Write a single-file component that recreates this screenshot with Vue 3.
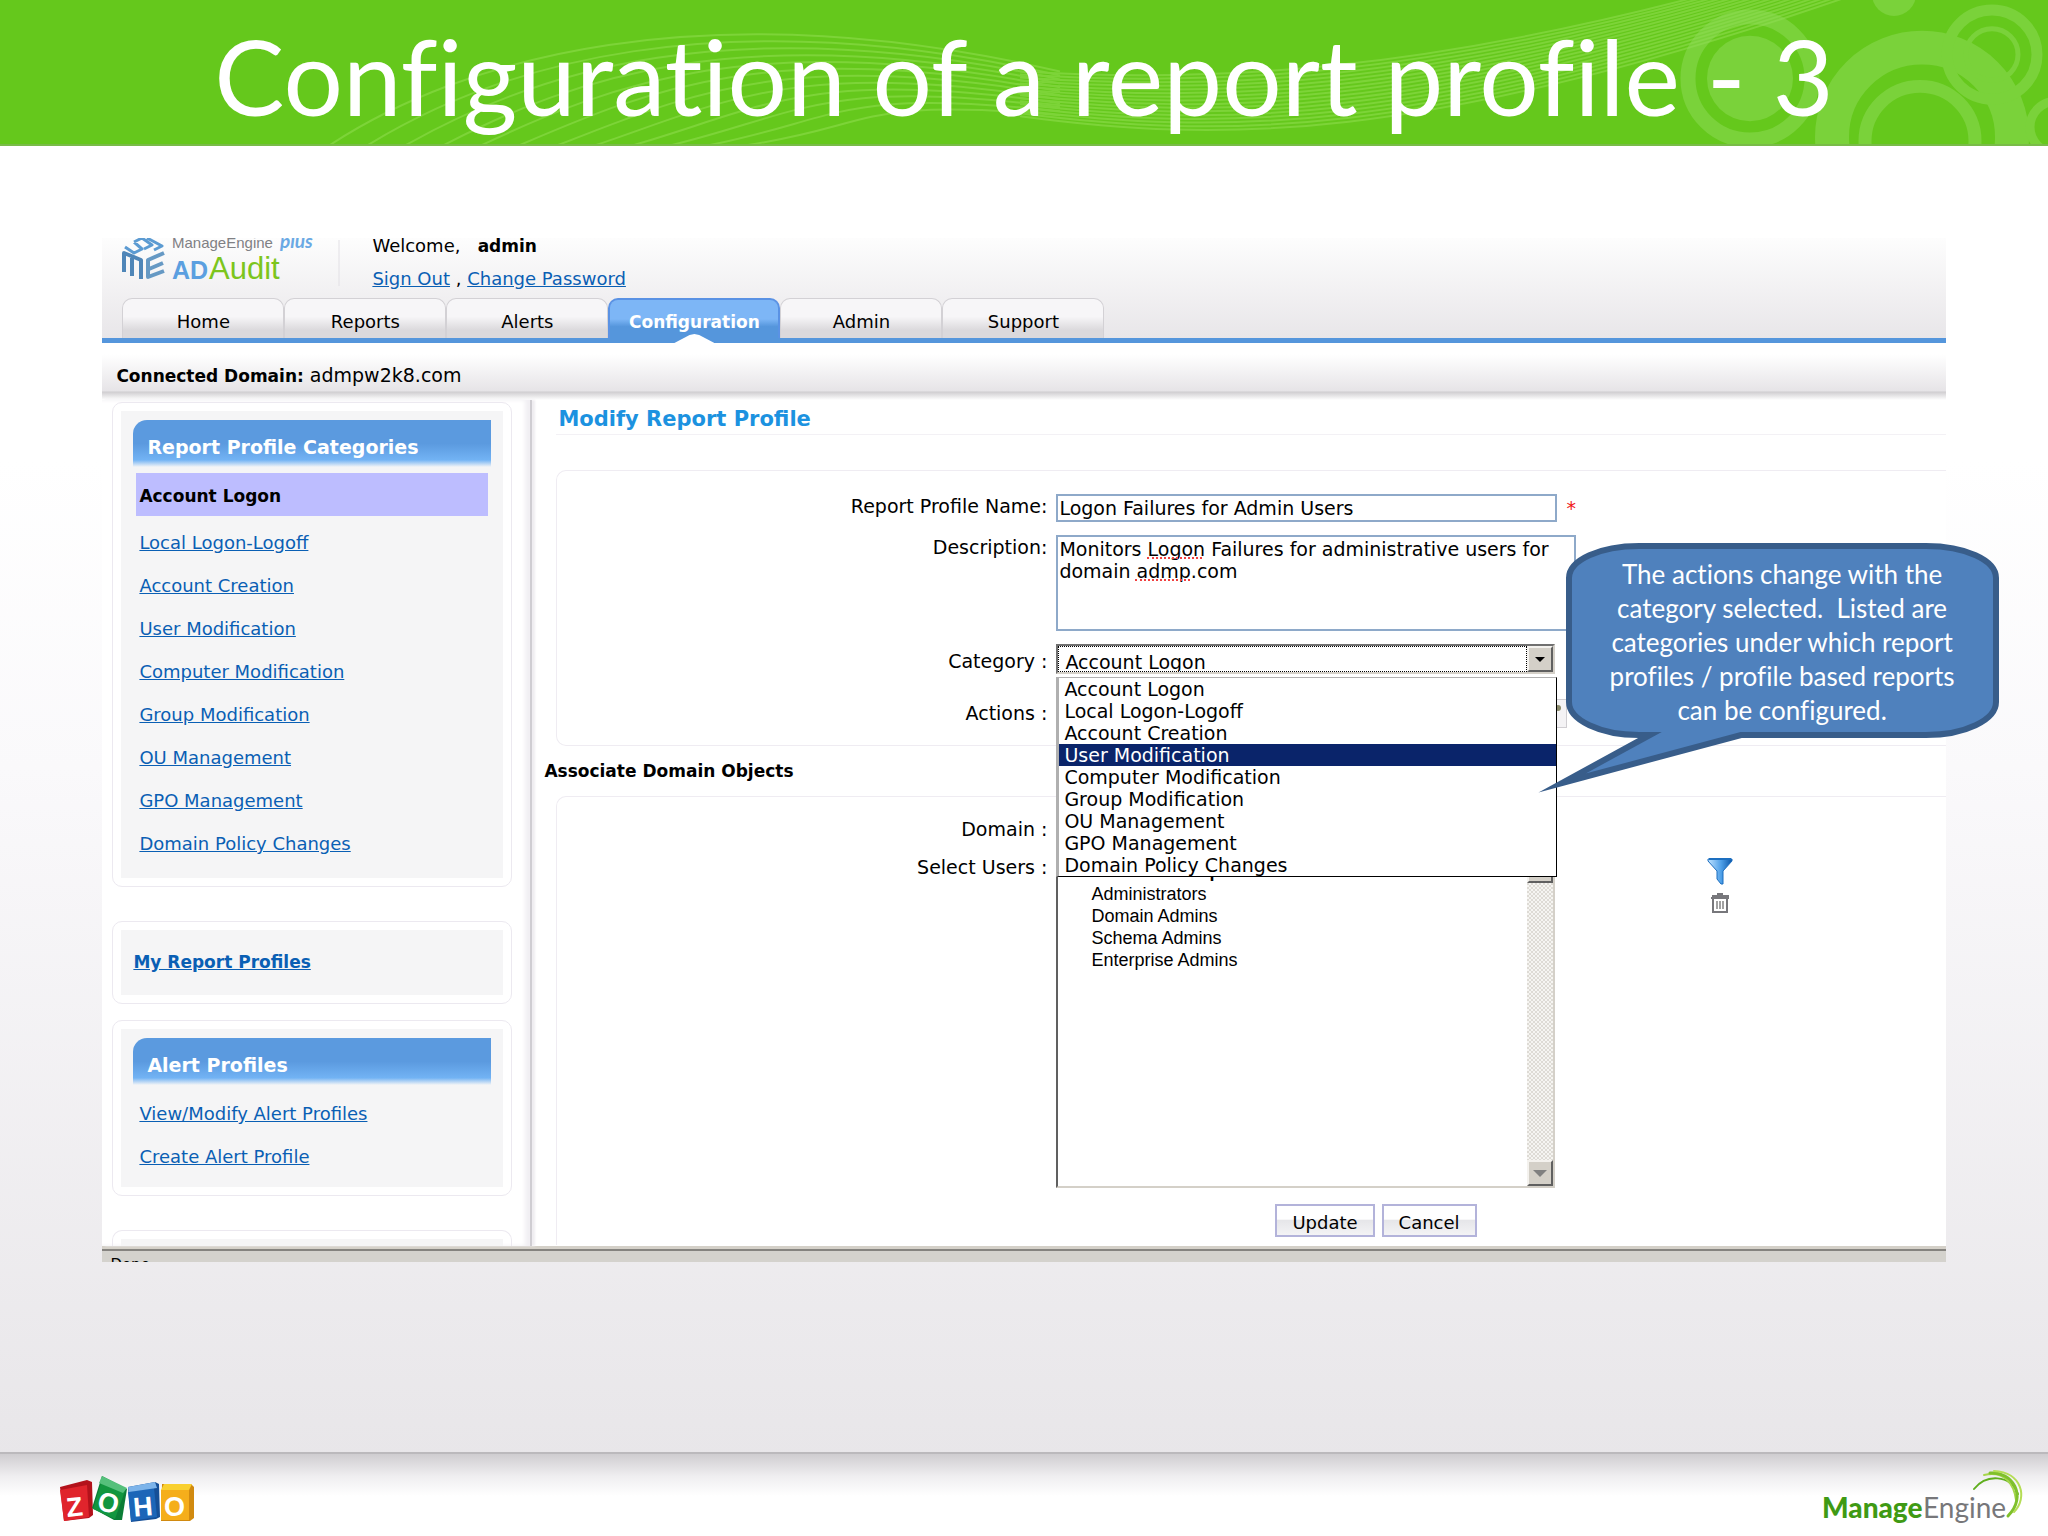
<script setup>
import { ref } from 'vue'

const tabs = ['Home', 'Reports', 'Alerts', 'Configuration', 'Admin', 'Support']
const activeTab = ref('Configuration')

const categories = [
  'Account Logon',
  'Local Logon-Logoff',
  'Account Creation',
  'User Modification',
  'Computer Modification',
  'Group Modification',
  'OU Management',
  'GPO Management',
  'Domain Policy Changes'
]
const category = ref('Account Logon')
const highlighted = ref('User Modification')

const alertLinks = ['View/Modify Alert Profiles', 'Create Alert Profile']
const groups = ['Administrators', 'Domain Admins', 'Schema Admins', 'Enterprise Admins']

const profileName = ref('Logon Failures for Admin Users')
const description = ref('Monitors Logon Failures for administrative users for domain admp.com')

// light strands that cross the title banner
const risingStrands = Array.from({ length: 12 }, (_, i) => {
  const x = 330 + i * 38
  return `M${x} 146 C${x + 130} ${60 + i * 6} ${700 + i * 14} ${-12 + i * 10} 1060 ${72 + i * 4}`
})
const fallingStrands = Array.from({ length: 16 }, (_, i) => {
  return `M1020 ${72 + i * 3} C1220 ${84 + i * 4} 1420 ${70 + i * 5} ${1700 + i * 10} -4`
})
</script>

<template>
  <div class="slide">
    <header class="banner">
      <svg class="banner-art" viewBox="0 0 2048 145" preserveAspectRatio="none" aria-hidden="true">
        <g fill="none" stroke="#b4f07a" stroke-width="2" opacity="0.3">
          <path v-for="d in risingStrands" :key="d" :d="d" />
          <path v-for="d in fallingStrands" :key="d" :d="d" />
        </g>
        <g fill="none" stroke="#8fdc58" opacity="0.5">
          <circle cx="1750" cy="79" r="62" stroke-width="15" />
          <circle cx="1750" cy="79" r="43" fill="#8fdc58" stroke="none" />
          <circle cx="1922" cy="138" r="90" stroke-width="34" />
          <circle cx="1920" cy="142" r="55" stroke-width="13" />
          <circle cx="1992" cy="55" r="45" stroke-width="11" />
          <circle cx="1992" cy="55" r="26" stroke-width="5" />
          <circle cx="2056" cy="128" r="26" stroke-width="9" />
          <circle cx="1894" cy="-6" r="22" fill="#8fdc58" stroke="none" />
        </g>
      </svg>
      <h1>Configuration of a report profile - 3</h1>
    </header>

    <main>
      <div class="app">
        <div class="top">
          <div class="brand">
            <svg class="logo" width="230" height="60" viewBox="0 0 230 60" role="img" aria-label="ManageEngine AD Audit plus">
              <g fill="none" stroke-width="4" stroke-linejoin="round">
                <path d="M2 34V15l17 7v19M10 38V20" stroke="#4f86b8" />
                <path d="M42 15l-16 7v17l16-6M27 31l14-6" stroke="#6699c4" />
                <path d="M3 9l9 6 8-4-8-7M12 4l8-4 10 7-8 4M25 0l15 8-8 4" stroke="#5c9bd2" stroke-width="3" />
              </g>
              <text x="50" y="10" class="logo-maker">ManageEngine</text>
              <text x="50" y="41" class="logo-ad">AD</text>
              <text x="87" y="41" class="logo-audit">Audit</text>
              <text x="158" y="10" class="logo-plus">plus</text>
              <path d="M217 2v46" stroke="#e2e0e5" />
            </svg>
            <div class="welcome">
              <p>Welcome, &nbsp;&nbsp;<b>admin</b></p>
              <p><a href="#">Sign Out</a> , <a href="#">Change Password</a></p>
            </div>
          </div>
          <nav class="tabs">
            <a v-for="tab in tabs" :key="tab" href="#" class="tab" :class="{ active: tab === activeTab }"
              @click.prevent="activeTab = tab">{{ tab }}</a>
          </nav>
        </div>

        <div class="domain-bar"><b>Connected Domain:</b> admpw2k8.com</div>

        <div class="body">
          <aside class="sidebar">
            <section class="card">
              <div class="card-inner">
                <h2>Report Profile Categories</h2>
                <ul>
                  <li v-for="item in categories" :key="item" :class="{ current: item === category }">
                    <b v-if="item === category">{{ item }}</b>
                    <a v-else href="#">{{ item }}</a>
                  </li>
                </ul>
              </div>
            </section>
            <section class="card mine">
              <div class="card-inner"><a href="#">My Report Profiles</a></div>
            </section>
            <section class="card alerts">
              <div class="card-inner">
                <h2>Alert Profiles</h2>
                <ul>
                  <li v-for="item in alertLinks" :key="item"><a href="#">{{ item }}</a></li>
                </ul>
              </div>
            </section>
            <section class="card cut"><div class="card-inner"></div></section>
          </aside>

          <form class="content" @submit.prevent>
            <h2 class="page-title">Modify Report Profile</h2>

            <div class="box">
              <label for="name">Report Profile Name:</label>
              <input id="name" v-model="profileName" type="text" class="field">
              <span class="required">*</span>

              <label for="desc">Description:</label>
              <div class="desc">
                <textarea id="desc" v-model="description" spellcheck="false"></textarea>
                <span class="squiggle one"></span>
                <span class="squiggle two"></span>
              </div>

              <label for="category" class="mid">Category :</label>
              <div class="combo">
                <select id="category" v-model="category">
                  <option v-for="item in categories" :key="item">{{ item }}</option>
                </select>
                <span class="arrow-box"><i class="arrow"></i></span>
                <ul class="menu" role="listbox" aria-label="Category">
                  <li v-for="item in categories" :key="item" role="option" :class="{ on: item === highlighted }"
                    :aria-selected="item === highlighted" @mouseenter="highlighted = item">{{ item }}</li>
                </ul>
              </div>

              <span class="actions-label">Actions :</span>
              <button type="button" class="picker" aria-label="Select actions"><i></i></button>
            </div>

            <h3>Associate Domain Objects</h3>

            <div class="box second">
              <span class="domain-label">Domain :</span>

              <label for="users">Select Users :</label>
              <div class="listbox">
                <select id="users" multiple>
                  <optgroup label="All Users or Group">
                    <option v-for="g in groups" :key="g">{{ g }}</option>
                  </optgroup>
                </select>
                <div class="scroll">
                  <button type="button" class="arrow-box" aria-label="Scroll up"></button>
                  <button type="button" class="arrow-box" aria-label="Scroll down"><i class="arrow grey"></i></button>
                </div>
              </div>
              <div class="tools">
                <button type="button" aria-label="Filter">
                  <svg width="26" height="28" viewBox="0 0 26 28">
                    <defs>
                      <linearGradient id="funnel">
                        <stop offset="0" stop-color="#bfe2ff" />
                        <stop offset="0.55" stop-color="#4d9fe8" />
                        <stop offset="1" stop-color="#0c56a8" />
                      </linearGradient>
                    </defs>
                    <path d="M1 2h24v2l-9 10v13h-2l-4-5v-8L1 4z" fill="url(#funnel)" stroke="#1d6fc0" />
                    <path d="M2 2h22" stroke="#1d6fc0" stroke-width="2" />
                  </svg>
                </button>
                <button type="button" aria-label="Delete">
                  <svg width="20" height="20" viewBox="0 0 20 20" fill="none" stroke="#77777b" stroke-width="2">
                    <path d="M7 1h6M1 5h18M2 3h16v2M3 6v13h14V6" />
                    <path d="M7 8v8M10 8v8M13 8v8" stroke-width="1" stroke="#444" />
                  </svg>
                </button>
              </div>

              <div class="buttons">
                <button type="submit">Update</button>
                <button type="button">Cancel</button>
              </div>
            </div>
          </form>
        </div>

        <div class="status">Done</div>
        <div class="callout">
          <svg viewBox="0 0 468 256" width="468" height="256" aria-hidden="true">
            <path d="M104 4H391C430 4 461 18 461 36V160C461 178 430 193 391 193H206L27 241L115 193H104C65 193 34 178 34 160V36C34 18 65 4 104 4Z"
              fill="#4f81bd" stroke="#385d8a" stroke-width="6" stroke-miterlimit="12" />
          </svg>
          <p>The actions change with the<br>category selected.&nbsp; Listed are<br>categories under which report<br>profiles / profile based reports<br>can be configured.</p>
        </div>
      </div>
    </main>

    <footer>
      <svg width="140" height="64" viewBox="0 0 140 64" role="img" aria-label="ZOHO">
        <path d="M0 13l27-7 5 2 1 33-4 3-25 3z" fill="#b3121b" />
        <path d="M0 16l27-5 2 32-25 4z" fill="#e0242c" />
        <path d="M42 2l25 13-5 31-8 0-22-12z" fill="#0b7d36" />
        <path d="M41 9l24 8-10 28-22-10z" fill="#12963f" />
        <path d="M42 2l25 12-4 5-24-10z" fill="#55c07b" />
        <path d="M68 13l27-5 4 2 1 33-4 2-25 3z" fill="#154f97" />
        <path d="M68 18l26-4 3 29-26 4z" fill="#1c66b8" />
        <path d="M68 13l27-5 2 6-28 4z" fill="#7db4ea" />
        <path d="M102 10h29l3 3v31l-4 3h-29z" fill="#d18a10" />
        <path d="M101 16h28v30h-28z" fill="#f5ae1b" />
        <path d="M104 10h28l-3 6h-28z" fill="#f9d02f" />
        <g class="zoho">
          <text x="6" y="42" transform="rotate(-6 15 30)">Z</text>
          <text x="38" y="38" transform="rotate(14 48 28)">O</text>
          <text x="73" y="42" transform="rotate(-5 83 30)">H</text>
          <text x="104" y="42">O</text>
        </g>
      </svg>
      <svg class="me" width="212" height="64" viewBox="0 0 212 64" role="img" aria-label="ManageEngine">
        <text x="0" y="44" class="me-manage">Manage</text>
        <text x="101" y="44" class="me-engine">Engine</text>
        <g fill="none" stroke-linecap="round">
          <path d="M152 15C164 0 188 0 196 20" stroke="#5fae1d" stroke-width="2" />
          <path d="M162 1C182-4 192 10 194 26" stroke="#a6d64a" stroke-width="2" />
          <path d="M168-1C190-3 206 22 186 42" stroke="#7fc02c" stroke-width="3" />
          <path d="M172-3C200-2 206 24 192 38" stroke="#b5dd55" stroke-width="2" />
        </g>
      </svg>
    </footer>
  </div>
</template>

<style>
body {
  margin: 0;
}
</style>

<style scoped>
* {
  box-sizing: border-box;
}

.slide {
  min-height: 100vh;
  display: flex;
  flex-direction: column;
  font-family: "DejaVu Sans", Verdana, sans-serif;
  font-size: 19px;
  color: #000;
  background: linear-gradient(#fff 30%, #faf9fb 50%, #e8e6e9 95%);
}

h1, h2, h3, p, ul {
  margin: 0;
  padding: 0;
}

ul {
  list-style: none;
}

a {
  color: #0a5fb4;
  font-size: 18px;
}

button, input, select, textarea {
  font: inherit;
  color: inherit;
}

/* banner */
.banner {
  position: relative;
  height: 146px;
  background: #65c81c;
  border-bottom: 2px solid #79bb48;
  text-align: center;
}

.banner-art {
  position: absolute;
  inset: 0;
  width: 100%;
  height: 100%;
}

.banner h1 {
  position: relative;
  color: #fff;
  font: 400 105px/150px Lato, sans-serif;
  font-variant-ligatures: none;
}

main {
  flex: 1;
  padding: 92px 5% 80px;
}

.app {
  position: relative;
  background: #fff;
}

/* top area */
.top {
  background: linear-gradient(#fdfdfd, #e8e6e9);
  border-bottom: 5px solid #5596dc;
}

.brand {
  display: flex;
  height: 60px;
  padding-left: 20px;
}

.logo-maker {
  font: 15px "Liberation Sans", sans-serif;
  fill: #808084;
}

.logo-ad {
  font: bold 25px "Liberation Sans", sans-serif;
  fill: #5b9fe0;
}

.logo-audit {
  font: 31px "Liberation Sans", sans-serif;
  fill: #7cc51c;
}

.logo-plus {
  font: italic bold 19px Lato, sans-serif;
  fill: #6aa9e4;
}

.welcome {
  padding-left: 20px;
  font-size: 18px;
}

.welcome p {
  height: 34px;
  line-height: 34px;
}

.welcome p:first-child {
  height: 24px;
  line-height: 16px;
}

.welcome b {
  font-size: 17px;
}

.tabs {
  display: flex;
  padding-left: 20px;
}

.tab {
  width: 162px;
  height: 40px;
  border: 1px solid #d3d1d5;
  border-bottom: 0;
  border-radius: 10px 10px 0 0;
  background: linear-gradient(#f7f6f8 45%, #dbd9dc 80%);
  color: #000;
  text-align: center;
  text-decoration: none;
  line-height: 46px;
}

.tab.active {
  position: relative;
  width: 172px;
  border: 2px solid #5a92e4;
  border-bottom: 0;
  background: linear-gradient(#7db6f6 50%, #5596dc 70%);
  color: #fff;
  font-size: 17px;
  font-weight: bold;
  line-height: 44px;
}

.tab.active::after {
  content: "";
  position: absolute;
  left: 50%;
  bottom: -5px;
  width: 40px;
  height: 9px;
  margin-left: -20px;
  background: #fff;
  clip-path: polygon(0 100%, 38% 10%, 50% 0, 62% 10%, 100% 100%);
}

.domain-bar {
  height: 57px;
  padding-left: 14px;
  line-height: 64px;
  background: linear-gradient(#fff 20%, #e6e4e7 84%, #d0ced1 86%, #fff);
}

.domain-bar b {
  font-size: 17px;
}

/* columns */
.body {
  display: flex;
}

.sidebar {
  flex: none;
  width: 430px;
  padding: 2px 18px 0 10px;
  border-right: 2px solid #cfcdd2;
  box-shadow: 3px 0 2px #efedf1, inset -5px 0 4px #f1eff3;
}

.card {
  padding: 8px;
  border: 1px solid #ece9f0;
  border-radius: 10px;
}

.card-inner {
  padding: 9px 12px 14px;
  background: #f5f5f6;
}

.card h2 {
  height: 47px;
  padding-left: 14px;
  border-radius: 14px 0 0 0;
  background: linear-gradient(#5b9adf 50%, #72b3f4 85%, #f5f5f6);
  color: #fff;
  font-size: 19px;
  line-height: 54px;
}

.card ul {
  padding: 6px 3px 0;
}

.card li {
  height: 43px;
  padding-left: 3px;
  line-height: 44px;
}

.card li b {
  font-size: 17px;
}

.card li.current {
  background: #bdbdff;
  margin-bottom: 4px;
}

.mine {
  margin-top: 34px;
}

.mine .card-inner, .alerts .card-inner {
  padding-bottom: 10px;
}

.mine a {
  font-size: 17px;
  font-weight: bold;
  line-height: 46px;
}

.alerts {
  margin-top: 16px;
}

.cut {
  height: 16px;
  margin-top: 34px;
  padding-bottom: 0;
  border-bottom: 0;
  border-radius: 10px 10px 0 0;
  overflow: hidden;
}

.content {
  flex: 1;
  min-width: 0;
  padding-left: 12px;
}

.page-title {
  height: 35px;
  margin: 0 0 35px 12px;
  padding-left: 2px;
  border-bottom: 1px solid #f3f1f5;
  color: #1c92e0;
  font-size: 21px;
  line-height: 38px;
}

.box {
  display: grid;
  grid-template-columns: 490px 501px minmax(0, 1fr);
  gap: 13px 9px;
  margin-left: 12px;
  padding: 23px 0 17px;
  border: 1px solid #efecf2;
  border-right: 0;
  border-radius: 10px 0 0 10px;
}

.box label, .actions-label, .domain-label {
  grid-column: 1;
  text-align: right;
  line-height: 24px;
}

.box label.mid {
  line-height: 34px;
}

.field, .desc textarea {
  border: 2px solid #8ea9c9;
  background: #fff;
}

.field {
  height: 28px;
  padding: 0 1px;
}

.required {
  color: #f01818;
  line-height: 28px;
}

.desc {
  position: relative;
  grid-column: 2 / 4;
  width: 520px;
  height: 96px;
}

.desc textarea {
  display: block;
  width: 100%;
  height: 100%;
  padding: 1px;
  line-height: 22px;
  resize: none;
  overflow: hidden;
}

.squiggle {
  position: absolute;
  width: 55px;
  border-bottom: 2px dotted #f04040;
}

.one {
  left: 91px;
  top: 22px;
}

.two {
  left: 79px;
  top: 44px;
}

.combo {
  position: relative;
  display: flex;
  height: 30px;
  margin-right: 2px;
  border: 2px solid #808080;
  border-color: #707070 #d4d0c8 #d4d0c8 #707070;
}

.combo select {
  flex: 1;
  appearance: none;
  padding: 4px 6px 0;
  border: 1px dotted #000;
  border-radius: 0;
  background: #fff;
}

.arrow-box {
  display: flex;
  align-items: center;
  justify-content: center;
  width: 26px;
  height: 26px;
  padding: 0;
  border: 2px solid;
  border-color: #f4f2ee #606060 #606060 #f4f2ee;
  background: #d4d0c8;
}

.arrow {
  border: 5px solid transparent;
  border-top-color: #000;
  border-bottom: 0;
}

.arrow.grey {
  border-width: 7px 7px 0;
  border-top-color: #808080;
}

.menu {
  position: absolute;
  z-index: 2;
  left: -2px;
  right: -4px;
  top: 31px;
  border: 1px solid #000;
  border-left-width: 3px;
  border-color: #b0b0b0 #000 #000 #b0b0b0;
  background: #fff;
}

.menu li {
  height: 22px;
  padding-left: 5px;
  line-height: 22px;
}

.menu li.on {
  background: #0a246a;
  color: #fff;
}

.actions-label, .picker {
  margin-top: 8px;
}

.actions-label {
  line-height: 28px;
}

.picker {
  display: flex;
  justify-content: flex-end;
  width: 511px;
  height: 29px;
  padding: 5px;
  border: 1px solid #d0ced2;
  background: #f4f3f5;
}

.picker i {
  width: 6px;
  height: 6px;
  border-radius: 3px;
  background: #8a8a6a;
}

h3 {
  font-size: 17px;
  line-height: 50px;
}

.second {
  gap: 12px 9px;
  padding: 16px 0 8px;
  border-bottom: 0;
  border-radius: 10px 0 0 0;
}

.domain-label {
  height: 30px;
  line-height: 32px;
}

.listbox {
  display: flex;
  height: 333px;
  margin-right: 2px;
  border: 2px solid;
  border-color: #808080 #d4d0c8 #d4d0c8 #606060;
}

.listbox select {
  flex: 1;
  padding: 4px 0;
  border: 0;
  border-radius: 0;
  outline: 0;
  background: #fff;
  font: 18px "Liberation Sans", Arial, sans-serif;
  overflow: hidden;
}

.listbox option {
  height: 22px;
  padding: 0 0 0 33px;
  line-height: 22px;
}

.listbox option::before {
  content: none;
}

.scroll {
  display: flex;
  flex-direction: column;
  justify-content: space-between;
  background: repeating-conic-gradient(#dedbd5 0 25%, #f6f5f2 0 50%) 0 0 / 4px 4px;
}

.tools {
  display: flex;
  flex-direction: column;
  align-items: flex-start;
  gap: 8px;
  padding: 2px 0 0 141px;
}

.tools button {
  display: flex;
  justify-content: center;
  width: 26px;
  padding: 0;
  border: 0;
  background: none;
}

.buttons {
  grid-column: 2 / 4;
  display: flex;
  gap: 7px;
  padding: 4px 0 0 219px;
}

.buttons button {
  height: 33px;
  padding: 3px 15px 0;
  border: 2px solid #b3b3da;
  background: linear-gradient(#fff 45%, #e6e6e9 50%, #f3f3f5);
  font-size: 18px;
}

.status {
  height: 16px;
  padding-left: 8px;
  border-top: 3px solid #d4d0c8;
  background: linear-gradient(#85837f 2px, #d4d2cd 2px);
  font-size: 15px;
  line-height: 32px;
  overflow: hidden;
}

/* speech bubble over the form */
.callout {
  position: absolute;
  z-index: 3;
  right: -57px;
  top: 304px;
  width: 468px;
}

.callout svg {
  display: block;
}

.callout p {
  position: absolute;
  left: 34px;
  right: 7px;
  top: 15px;
  color: #fff;
  font: 26px/34px Lato, sans-serif;
  font-variant-ligatures: none;
  text-align: center;
  white-space: nowrap;
}

footer {
  display: flex;
  justify-content: space-between;
  align-items: flex-start;
  height: 84px;
  padding: 20px 14px 0 60px;
  border-top: 2px solid #bbb9bc;
  background: linear-gradient(#cfcdd0, #efeef0 22px, #fff 42px);
}

.me {
  overflow: visible;
}

.zoho {
  font: bold 27px "Liberation Sans", sans-serif;
  fill: #fff;
}

.me-manage {
  font: 900 28px Lato, sans-serif;
  fill: #3f9a14;
}

.me-engine {
  font: 28px Lato, sans-serif;
  fill: #77777a;
}
</style>
